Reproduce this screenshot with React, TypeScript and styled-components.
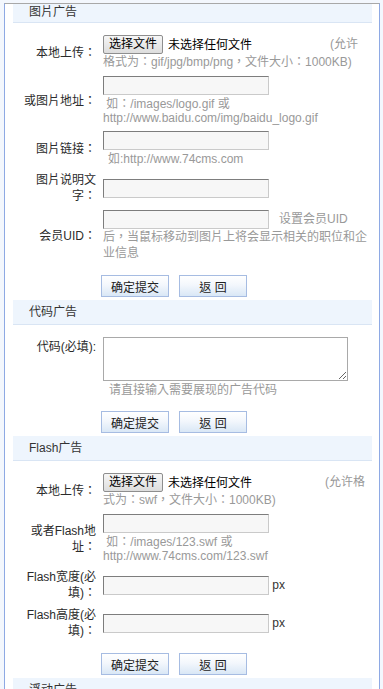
import React from "react";
import styled, { createGlobalStyle } from "styled-components";

const GlobalStyle = createGlobalStyle`
  html, body { margin: 0; padding: 0; }
  body {
    background: #f3f7fd;
    font-family: "Liberation Sans", "Noto Sans CJK TC", "Noto Sans CJK SC", sans-serif;
    font-size: 12px;
    color: #333;
  }
`;

// scrolled admin frame, the first header is partly hidden under the top edge
const Frame = styled.div`
  margin: 3px 0 0 4px;
  width: 376px;
  min-height: 700px;
  box-sizing: border-box;
  border-top: 1px solid #a8a8a8;
  border-left: 1px solid #8ea9e4;
  border-right: 1px solid #8ea9e4;
  background: #fff;
  padding: 0 7px 0 8px;
  overflow: hidden;
`;

const Header = styled.div<{ $clipped?: boolean }>`
  height: 24px;
  line-height: ${({ $clipped }) => ($clipped ? "29px" : "24px")};
  margin-top: ${({ $clipped }) => ($clipped ? "-6px" : "0")};
  padding-left: 16px;
  background: #eef5fd;
  border-bottom: 1px solid #d9e5f4;
  color: #333;
`;

const FormTable = styled.div`
  display: flex;
  flex-direction: column;
  padding-top: 9px;
`;

const Row = styled.div<{ $top?: boolean }>`
  display: flex;
  align-items: ${({ $top }) => ($top ? "flex-start" : "center")};
  padding: 3px 0;
`;

const Label = styled.div<{ $pad?: number }>`
  flex: none;
  width: 90px;
  box-sizing: border-box;
  padding: ${({ $pad = 0 }) => $pad}px 7px 0 10px;
  text-align: right;
  line-height: 16px;
  color: #2b2b2b;
`;

const Value = styled.div`
  width: 265px;
  line-height: 16px;
  color: #333;
`;

const Note = styled.span`
  color: #999;
`;

const Hint = styled.div<{ $indent?: number }>`
  margin-top: 2px;
  line-height: 14px;
  color: #999;
  text-indent: ${({ $indent = 0 }) => $indent}px;
`;

const FileBox = styled.span<{ $width: number }>`
  display: inline-flex;
  align-items: center;
  width: ${({ $width }) => $width}px;
  vertical-align: middle;
  color: #000;
`;

const FileButton = styled.button`
  flex: none;
  width: 60px;
  height: 19px;
  margin: 0 5px 0 0;
  padding: 0;
  border: 1px solid #8e8e8e;
  border-radius: 2px;
  background: linear-gradient(#f6f6f6, #dddddd);
  font: inherit;
  line-height: 17px;
  color: #000;
`;

const FileName = styled.span`
  white-space: nowrap;
`;

const TextInput = styled.input<{ $block?: boolean }>`
  display: ${({ $block }) => ($block ? "block" : "inline-block")};
  vertical-align: middle;
  box-sizing: border-box;
  width: 166px;
  height: 19px;
  margin: 0;
  padding: 0 3px;
  border: 1px solid;
  border-color: #7d7d7d #cacaca #cacaca #7d7d7d;
  background: #f7f7f7;
  font: inherit;
`;

const Side = styled.span<{ $gap: number }>`
  margin-left: ${({ $gap }) => $gap}px;
`;

const CodeArea = styled.textarea`
  display: block;
  box-sizing: border-box;
  width: 245px;
  height: 44px;
  margin: 0;
  border: 1px solid #a9a9a9;
  background: #fff;
  font: inherit;
`;

const ButtonRow = styled.div`
  display: flex;
  gap: 10px;
  padding: 11px 0 3px 88px;
`;

const Button = styled.button`
  width: 68px;
  height: 22px;
  padding: 0;
  border: 1px solid #a6bce2;
  background: linear-gradient(#ffffff 0%, #f3f7fc 45%, #d9e7f6 100%);
  font: inherit;
  font-size: 12px;
  color: #222;
  cursor: pointer;
`;

const Buttons: React.FC = () => (
  <ButtonRow>
    <Button>确定提交</Button>
    <Button>返 回</Button>
  </ButtonRow>
);

const FileField: React.FC<{ width: number }> = ({ width }) => (
  <FileBox $width={width}>
    <FileButton>选择文件</FileButton>
    <FileName>未选择任何文件</FileName>
  </FileBox>
);

export default function App() {
  return (
    <>
      <GlobalStyle />
      <Frame>
        {/* 图片 */}
        <Header $clipped>图片广告</Header>
        <FormTable>
          <Row>
            <Label>本地上传：</Label>
            <Value>
              <FileField width={227} />
              <Note>(允许格式为：gif/jpg/bmp/png，文件大小：1000KB)</Note>
            </Value>
          </Row>
          <Row>
            <Label>或图片地址：</Label>
            <Value>
              <TextInput $block />
              <Hint>{"\u00a0如：/images/logo.gif 或 http://www.baidu.com/img/baidu_logo.gif"}</Hint>
            </Value>
          </Row>
          <Row>
            <Label>图片链接：</Label>
            <Value>
              <TextInput $block />
              <Hint $indent={5}>如:http://www.74cms.com</Hint>
            </Value>
          </Row>
          <Row>
            <Label>图片说明文字：</Label>
            <Value>
              <TextInput $block />
            </Value>
          </Row>
          <Row>
            <Label>会员UID：</Label>
            <Value>
              <TextInput />
              <Side $gap={10}>
                <Note>设置会员UID后，当鼠标移动到图片上将会显示相关的职位和企业信息</Note>
              </Side>
            </Value>
          </Row>
        </FormTable>
        <Buttons />

        {/* 代码 */}
        <Header>代码广告</Header>
        <FormTable>
          <Row $top>
            <Label $pad={2}>代码(必填):</Label>
            <Value>
              <CodeArea />
              <Hint $indent={6}>请直接输入需要展现的广告代码</Hint>
            </Value>
          </Row>
        </FormTable>
        <Buttons />

        {/* flash */}
        <Header>Flash广告</Header>
        <FormTable>
          <Row>
            <Label>本地上传：</Label>
            <Value>
              <FileField width={222} />
              <Note>(允许格式为：swf，文件大小：1000KB)</Note>
            </Value>
          </Row>
          <Row>
            <Label>或者Flash地址：</Label>
            <Value>
              <TextInput $block />
              <Hint>{"\u00a0如：/images/123.swf 或 http://www.74cms.com/123.swf"}</Hint>
            </Value>
          </Row>
          <Row>
            <Label>Flash宽度(必填)：</Label>
            <Value>
              <TextInput /> px
            </Value>
          </Row>
          <Row>
            <Label>Flash高度(必填)：</Label>
            <Value>
              <TextInput /> px
            </Value>
          </Row>
        </FormTable>
        <Buttons />

        <Header>浮动广告</Header>
      </Frame>
    </>
  );
}
